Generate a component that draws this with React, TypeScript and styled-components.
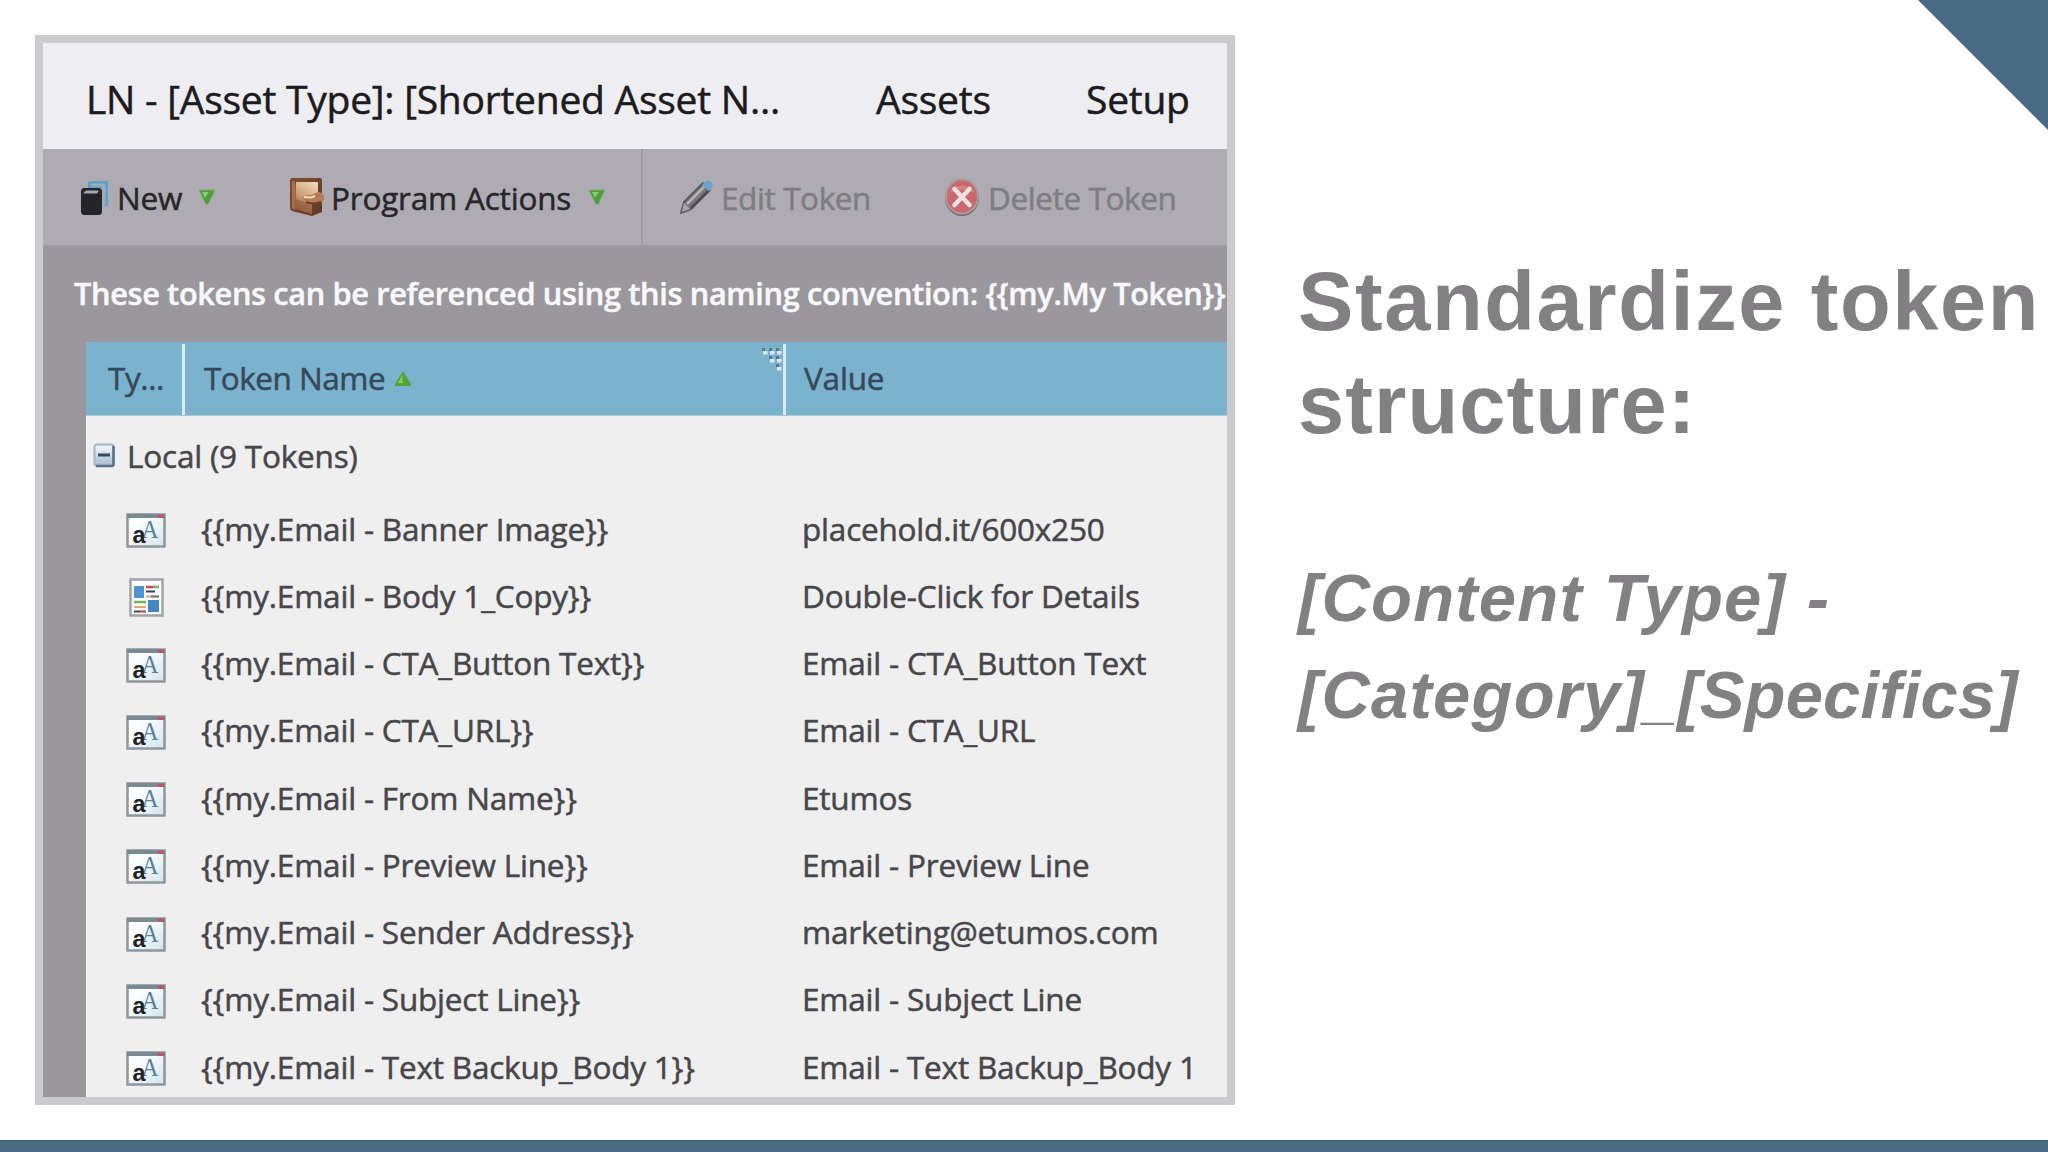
import React from 'react';
import styled, { createGlobalStyle } from 'styled-components';

const GlobalStyle = createGlobalStyle`
  * { box-sizing: border-box; }
  body { margin: 0; background: #fefefe; overflow: hidden; }
`;

const Slide = styled.main`
  position: relative;
  width: 2048px;
  height: 1152px;
  display: flex;
  flex-direction: column;
  overflow: hidden;
  background: #fefefe;
`;

const Corner = styled.div`
  position: absolute;
  top: 0;
  right: 0;
  width: 130px;
  height: 130px;
  background: #496a83;
  clip-path: polygon(0 0, 100% 0, 100% 100%);
`;

const Content = styled.div`
  flex: 1;
  display: flex;
  align-items: flex-start;
  padding: 35px 0 0 35px;
`;

const BottomBar = styled.footer`
  height: 12px;
  background: #496a83;
  border-top: 1px solid #3d5a6e;
`;

const Panel = styled.section`
  width: 1200px;
  height: 1070px;
  flex: none;
  border: 8px solid #cbcacc;
  overflow: hidden;
  display: flex;
  flex-direction: column;
  background: #9a989d;
  color: #47464a;
  font-family: 'Open Sans', 'Noto Sans', sans-serif;
  font-size: 31.5px;
  letter-spacing: -0.2px;
  white-space: nowrap;
  -webkit-text-stroke: 0.5px currentColor;
`;

const Tabs = styled.nav`
  height: 106px;
  flex: none;
  display: flex;
  align-items: center;
  padding: 4px 0 0 43px;
  background: #eeedf1;
  color: #1b1b20;
  font-size: 39px;
  letter-spacing: -0.25px;
`;

const Tab = styled.span<{ $width: number }>`
  width: ${(p) => p.$width}px;
`;

const Toolbar = styled.div`
  height: 97px;
  flex: none;
  display: flex;
  background: #aeacb2;
  border-bottom: 1px solid #a19fa4;
`;

const ToolGroup = styled.div<{ $start: number; $gap: number; $divided?: boolean }>`
  display: flex;
  align-items: center;
  gap: ${(p) => p.$gap}px;
  padding-left: ${(p) => p.$start}px;
  width: ${(p) => (p.$divided ? '600px' : 'auto')};
  border-right: ${(p) => (p.$divided ? '2px solid #9f9da3' : 'none')};
`;

const ToolButton = styled.div<{ $width: number; $disabled?: boolean }>`
  width: ${(p) => p.$width}px;
  display: flex;
  align-items: center;
  gap: 7px;
  color: ${(p) => (p.$disabled ? '#7f7d82' : '#27262b')};
  letter-spacing: ${(p) => (p.$disabled ? '-0.4px' : '-0.2px')};

  svg { flex: none; }
`;

const Caret = styled.svg`
  margin-left: auto;
`;

const Notice = styled.p`
  height: 96px;
  flex: none;
  margin: 0;
  padding-left: 31px;
  line-height: 95px;
  color: #f8f7fa;
  font-size: 30.7px;
  font-weight: 600;
  letter-spacing: -0.33px;
`;

const Table = styled.div`
  flex: 1;
  margin-left: 43px;
  background: #efeff0;
  border-top-left-radius: 4px;
`;

const Columns = styled.div`
  display: grid;
  grid-template-columns: 99px 601px 1fr;
  height: 74px;
  background: #7bb3ce;
  border-bottom: 1px solid #a9cad9;
  border-top-left-radius: 4px;
  color: #35495a;
`;

const Column = styled.div<{ $pad: number; $track?: number; $line?: boolean }>`
  position: relative;
  display: flex;
  align-items: center;
  gap: 10px;
  padding: 0 0 3px ${(p) => p.$pad}px;
  letter-spacing: ${(p) => p.$track ?? -0.2}px;

  &::after {
    content: '';
    display: ${(p) => (p.$line ? 'block' : 'none')};
    position: absolute;
    top: 2px;
    bottom: 0;
    right: 0;
    width: 3px;
    background: #dcebf1;
  }
`;

const SortArrow = styled.svg`
  margin-top: 4px;
`;

const Grip = styled.svg`
  position: absolute;
  top: 4px;
  right: 4px;
`;

const GroupRow = styled.div`
  height: 78.6px;
  display: flex;
  align-items: center;
  gap: 12px;
  padding: 1px 0 0 7px;
`;

const Row = styled.div`
  display: grid;
  grid-template-columns: 115px 601px 1fr;
  align-items: center;
  height: 67.25px;
`;

const IconCell = styled.div`
  display: flex;
  justify-content: center;
  padding: 5px 0 0 5px;
`;

const Message = styled.div`
  padding: 215px 0 0 63px;
  color: #828083;
  font-family: 'Liberation Sans', Arial, sans-serif;
  font-weight: bold;
  white-space: nowrap;
`;

const Heading = styled.h1`
  margin: 0 0 93px;
  font-size: 83px;
  line-height: 103px;
  letter-spacing: 1.6px;
`;

const HeadingEnd = styled.span`
  letter-spacing: 1.1px;
`;

const Pattern = styled.p`
  margin: 0;
  font-size: 67px;
  font-style: italic;
  line-height: 97px;
  letter-spacing: 1.2px;
  word-spacing: 1px;
`;

const Specifics = styled.span`
  letter-spacing: 0.15px;
`;

const Underscore = styled.span`
  font-size: 58px;
  font-weight: normal;
  letter-spacing: 0;
`;

const NewIcon = () => (
  <svg width="30" height="36" viewBox="0 0 30 36">
    <path d="M8 9V5q0-3 2.500-3H28v25h-4V9z" fill="#5ba3ca" />
    <path d="M11 6h11q2 0 2 2v18" fill="none" stroke="#9cacba" strokeWidth="3" />
    <rect x="1" y="9" width="21" height="27" rx="3.500" fill="#252429" />
    <path d="M3 14.500l3-3h13l-2 3z" fill="#a7a5aa" />
  </svg>
);

const ProgramIcon = () => (
  <svg width="34" height="40" viewBox="0 0 34 40">
    <defs>
      <linearGradient id="leather" x1="0" y1="0" x2="1" y2="1">
        <stop offset="0" stopColor="#7d4f35" />
        <stop offset="1" stopColor="#613822" />
      </linearGradient>
      <linearGradient id="flap" x1="0.7" y1="0" x2="0.3" y2="1">
        <stop offset="0" stopColor="#efd3b0" />
        <stop offset="0.5" stopColor="#cda07b" />
        <stop offset="1" stopColor="#85523a" />
      </linearGradient>
    </defs>
    <path d="M2 1h28q2 0 2 3v31l-10 4L2 34Q0 33 0 30V4q0-3 2-3z" fill="url(#leather)" />
    <path d="M2 4h3v29l-3-2z" fill="#a87050" />
    <path d="M6 5h22v13l-6 3v16L5 32z" fill="url(#flap)" />
    <path d="M4 22l9 2 9 4v8L4 32z" fill="#925b3d" opacity=".6" />
    <path d="M13 20q3-3 8-2l7-3q5 0 6 4v4q-3 4-9 3l-10-2q-3-2-2-4z" fill="#b77d59" />
    <path d="M14 20l7 .5 4-1.500" stroke="#f0dcc6" strokeWidth="2" fill="none" />
    <path d="M16 25q7 3 15 0" stroke="#71432c" strokeWidth="2" fill="none" />
  </svg>
);

const PencilIcon = () => (
  <svg width="35" height="36" viewBox="0 0 35 36">
    <path d="M2 34l3-11L24 4l7 7-19 19z" fill="#77757a" stroke="#5d5b60" strokeWidth="2" strokeLinejoin="round" />
    <path d="M8 25L26 7" stroke="#b5b3b8" strokeWidth="2.500" />
    <path d="M12 29L29 12" stroke="#49474d" strokeWidth="2" />
    <path d="M5 24l6 6-8 3z" fill="#a6a4a9" />
    <path d="M24 5q3-5 7-3 4 2 2 7l-3 3-7-6z" fill="#6ea3c9" />
  </svg>
);

const DeleteIcon = () => (
  <svg width="38" height="40" viewBox="0 0 38 40">
    <ellipse cx="19" cy="21" rx="17" ry="18" fill="#77696e" />
    <ellipse cx="19" cy="19.500" rx="17" ry="18" fill="#a99a9f" />
    <ellipse cx="19" cy="19.500" rx="15" ry="16" fill="#cb686c" />
    <path d="M6 16a14 12 0 0 1 26 0q-13-7-26 0z" fill="#d68d91" opacity=".7" />
    <path d="M11.500 12l15 16M26.500 12l-15 16" stroke="#eee3e4" strokeWidth="4.500" strokeLinecap="round" />
  </svg>
);

const DropCaret = () => (
  <Caret width="18" height="18" viewBox="0 0 18 18">
    <path d="M1 2h16L10.500 15.500q-1.500 2-3 0z" fill="#4f9c38" stroke="#83a977" strokeWidth="1" />
    <path d="M4 4h7l-4 6z" fill="#86ce6b" />
  </Caret>
);

const SortIcon = () => (
  <SortArrow width="16" height="16" viewBox="0 0 16 16">
    <path d="M8 0l8 13v2H0v-2z" fill="#54a238" />
    <path d="M7 4l1 8H3z" fill="#8ccb52" />
  </SortArrow>
);

const GripIcon = () => (
  <Grip width="21" height="26" viewBox="0 0 21 26">
    {[[1, 2], [8, 2], [15, 2], [8, 10], [15, 10], [15, 18]].map(([x, y]) => (
      <g key={`${x}-${y}`}>
        <rect x={x} y={y} width="3" height="3" fill="#557a8f" />
        <rect x={x + 1} y={y + 3} width="4.5" height="3.5" fill="#dcecf2" />
      </g>
    ))}
  </Grip>
);

const CollapseIcon = () => (
  <svg width="22" height="25" viewBox="0 0 22 25">
    <defs>
      <linearGradient id="toggle" x1="0" y1="0" x2="0" y2="1">
        <stop offset="0" stopColor="#f6f9fb" />
        <stop offset="1" stopColor="#a9bccd" />
      </linearGradient>
    </defs>
    <rect x="1.500" y="1.500" width="19" height="21" rx="2.500" fill="url(#toggle)" stroke="#a3b5c5" strokeWidth="2" />
    <path d="M20.500 3v18q0 2-2 2H3" fill="none" stroke="#56708a" strokeWidth="2.500" />
    <path d="M5 12h12" stroke="#334d68" strokeWidth="3" />
  </svg>
);

const TextIcon = () => (
  <svg width="40" height="35" viewBox="0 0 40 35">
    <defs>
      <linearGradient id="page" x1="0" y1="0" x2="1" y2="1">
        <stop offset="0.3" stopColor="#fbfdfe" />
        <stop offset="1" stopColor="#d3e4ea" />
      </linearGradient>
    </defs>
    <rect x="1.500" y="1.500" width="37" height="32" fill="url(#page)" stroke="#8c979e" strokeWidth="2.500" />
    <path d="M1 1h38v4H1z" fill="#7d8990" />
    <path d="M31 2h7v3h-5z" fill="#bf5265" />
    <text x="15.500" y="24.500" fontFamily="Liberation Serif, serif" fontSize="26" fill="#587f9b" letterSpacing="0" textLength="17" lengthAdjust="spacingAndGlyphs">A</text>
    <text x="6.500" y="29.500" fontFamily="Liberation Sans, sans-serif" fontSize="23" fontWeight="bold" fill="#202125" letterSpacing="0" textLength="13" lengthAdjust="spacingAndGlyphs">a</text>
  </svg>
);

const DocumentIcon = () => (
  <svg width="35" height="39" viewBox="0 0 35 39">
    <rect x="1.500" y="1.500" width="32" height="36" fill="#fafbfc" stroke="#a2a3a7" strokeWidth="2.500" />
    <rect x="5" y="8" width="10" height="12" fill="#4f93d4" />
    <rect x="19" y="22" width="11" height="12" fill="#4386c2" />
    <path d="M17 9h7" stroke="#c74955" strokeWidth="2.500" />
    <path d="M24 9h6M5 24h12" stroke="#75b360" strokeWidth="2.500" />
    <path d="M17 13.500h9M5 33.500h6" stroke="#414247" strokeWidth="2.200" />
    <path d="M17 18.500h5M5 29h12" stroke="#dfaa6c" strokeWidth="2.200" />
    <path d="M22 18.500h8" stroke="#777478" strokeWidth="2.200" />
    <path d="M11 33.500h6" stroke="#c94b50" strokeWidth="2.200" />
  </svg>
);

const tokens: { name: string; value: string; rich?: boolean }[] = [
  { name: 'Banner Image', value: 'placehold.it/600x250' },
  { name: 'Body 1_Copy', value: 'Double-Click for Details', rich: true },
  { name: 'CTA_Button Text', value: 'Email - CTA_Button Text' },
  { name: 'CTA_URL', value: 'Email - CTA_URL' },
  { name: 'From Name', value: 'Etumos' },
  { name: 'Preview Line', value: 'Email - Preview Line' },
  { name: 'Sender Address', value: 'marketing@etumos.com' },
  { name: 'Subject Line', value: 'Email - Subject Line' },
  { name: 'Text Backup_Body 1', value: 'Email - Text Backup_Body 1' },
];

export default function App() {
  return (
    <Slide>
      <GlobalStyle />
      <Content>
        <Panel>
          <Tabs>
            <Tab $width={790}>LN - [Asset Type]: [Shortened Asset N...</Tab>
            <Tab $width={210}>Assets</Tab>
            <Tab $width={120}>Setup</Tab>
          </Tabs>
          <Toolbar>
            <ToolGroup $start={37} $gap={74} $divided>
              <ToolButton $width={136}><NewIcon />New<DropCaret /></ToolButton>
              <ToolButton $width={316}><ProgramIcon />Program Actions<DropCaret /></ToolButton>
            </ToolGroup>
            <ToolGroup $start={36} $gap={72}>
              <ToolButton $width={192} $disabled><PencilIcon />Edit Token</ToolButton>
              <ToolButton $width={240} $disabled><DeleteIcon />Delete Token</ToolButton>
            </ToolGroup>
          </Toolbar>
          <Notice>{'These tokens can be referenced using this naming convention: {{my.My Token}}'}</Notice>
          <Table>
            <Columns>
              <Column $pad={22} $track={-0.4} $line>Ty...</Column>
              <Column $pad={19} $track={-0.5} $line>Token Name<SortIcon /><GripIcon /></Column>
              <Column $pad={18}>Value</Column>
            </Columns>
            <GroupRow><CollapseIcon />Local (9 Tokens)</GroupRow>
            {tokens.map((token) => (
              <Row key={token.name}>
                <IconCell>{token.rich ? <DocumentIcon /> : <TextIcon />}</IconCell>
                <span>{`{{my.Email - ${token.name}}}`}</span>
                <span>{token.value}</span>
              </Row>
            ))}
          </Table>
        </Panel>
        <Message>
          <Heading>Standardize token<br /><HeadingEnd>structure:</HeadingEnd></Heading>
          <Pattern>[Content Type] -<br />[Category]<Underscore>_</Underscore><Specifics>[Specifics]</Specifics></Pattern>
        </Message>
      </Content>
      <BottomBar />
      <Corner />
    </Slide>
  );
}
